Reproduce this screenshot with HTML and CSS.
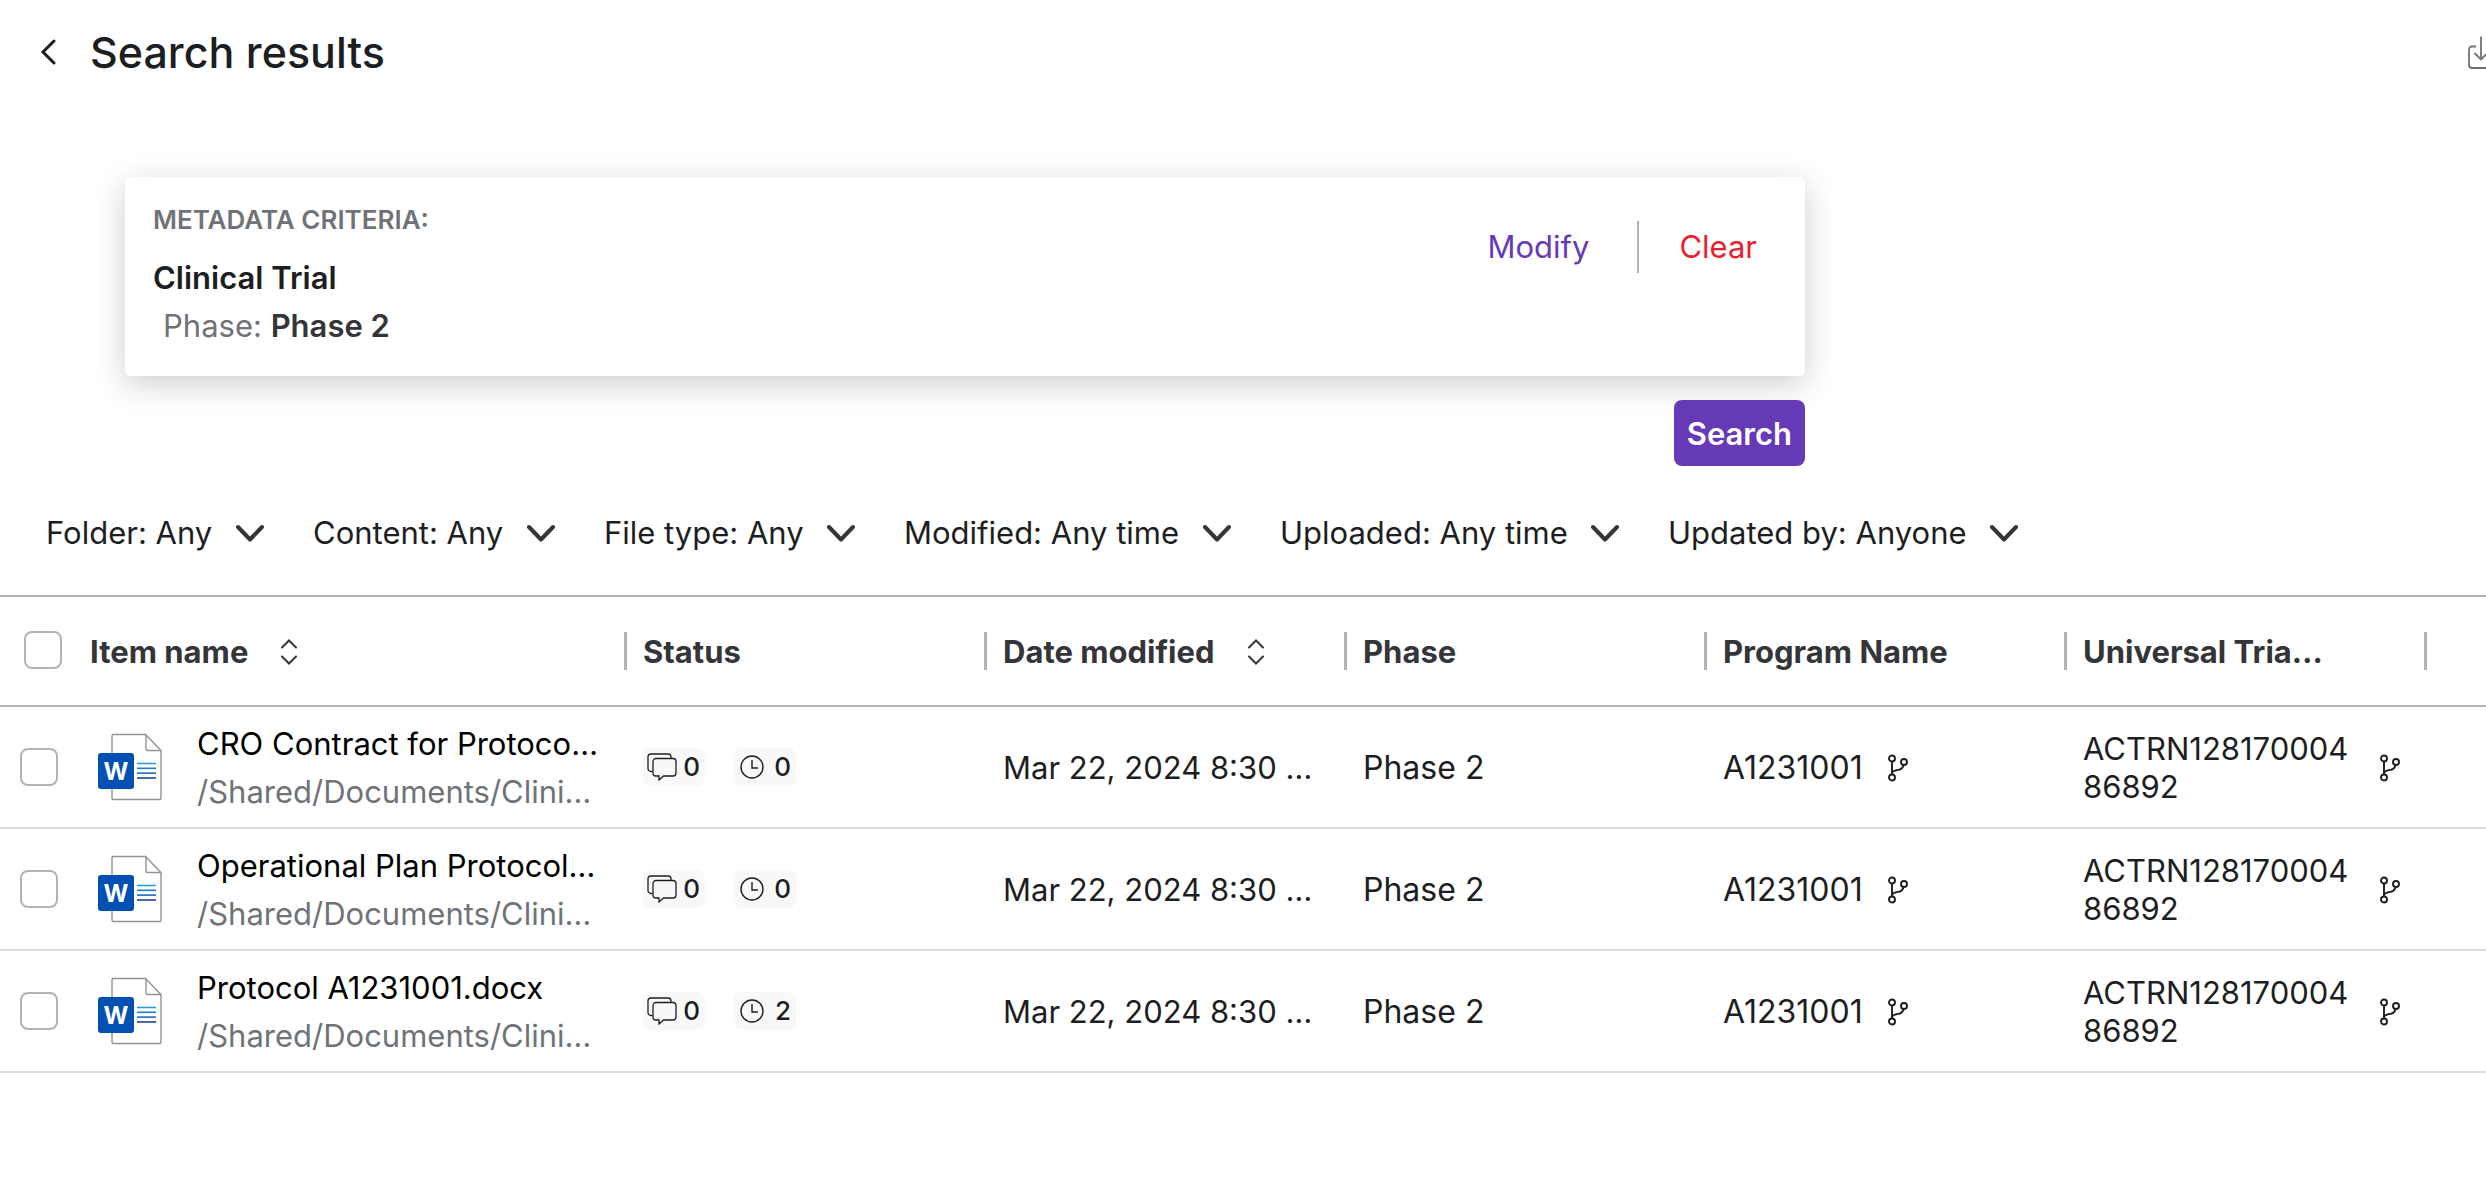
FILE: index.html
```html
<!DOCTYPE html>
<html lang="en">
<head>
<meta charset="utf-8">
<meta name="viewport" content="width=device-width, initial-scale=1">
<title>Search results</title>
<link rel="stylesheet" href="styles.css">
</head>
<body>
<svg class="sprite" aria-hidden="true">
  <symbol id="chevron" viewBox="0 0 30 18"><path d="M3 3l12 12.500L27 3" fill="none" stroke="currentColor" stroke-width="4" stroke-linecap="round" stroke-linejoin="round"/></symbol>
  <symbol id="sort" viewBox="0 0 18 26"><path d="M2 8.500L9 1.500l7 7M2 17.500l7 7 7-7" fill="none" stroke="currentColor" stroke-width="2" stroke-linecap="round"/></symbol>
  <symbol id="comments" viewBox="0 0 30 28">
    <path d="M5.500 18.500H4a3 3 0 0 1-3-3V4a3 3 0 0 1 3-3h17a3 3 0 0 1 3 3v1.500" fill="none" stroke="currentColor" stroke-width="1.300"/>
    <path d="M9 5.500h17a3 3 0 0 1 3 3v11.500a3 3 0 0 1-3 3h-9.500l-4.500 4v-4H9a3 3 0 0 1-3-3V8.500a3 3 0 0 1 3-3z" fill="none" stroke="currentColor" stroke-width="1.300"/>
  </symbol>
  <symbol id="clock" viewBox="0 0 24 24"><circle cx="12" cy="12" r="11" fill="none" stroke="currentColor" stroke-width="1.400"/><path d="M12 5v8h6" fill="none" stroke="currentColor" stroke-width="1.400"/></symbol>
  <symbol id="branch" viewBox="0 0 20 28">
    <g fill="none" stroke="currentColor" stroke-width="1.900"><circle cx="4" cy="4.500" r="3"/><circle cx="4" cy="23.500" r="3"/><circle cx="16" cy="8" r="3"/><path d="M4 7.500v13M15.500 11c-.5 3-1.500 4-4.500 4.700-3 .6-5.500.8-7 2.800"/></g>
  </symbol>
  <symbol id="word" viewBox="0 0 64 68">
    <path d="M14 1.500h33.500L63 17.500V65a1.500 1.500 0 0 1-1.500 1.500h-46A1.500 1.500 0 0 1 14 65V3a1.500 1.500 0 0 1 1.500-1.500z" fill="#fff" stroke="#929292" stroke-width="1.400"/>
    <path d="M48 2v14a1.500 1.500 0 0 0 1.500 1.500H63" fill="none" stroke="#929292" stroke-width="1.400"/>
    <g stroke-width="1.600"><path d="M39 30.500h19" stroke="#2a9fe0"/><path d="M39 35.300h19" stroke="#1a7ed0"/><path d="M39 40.100h19" stroke="#2266bd"/><path d="M39 45h19" stroke="#174693"/></g>
    <rect y="20" width="36" height="36" rx="3" fill="#0350b3"/>
    <text x="18" y="47" class="word-letter" text-anchor="middle">W</text>
  </symbol>
</svg>

<header class="page-header">
  <button class="icon-button" type="button" aria-label="Back">
    <svg width="16" height="26" viewBox="0 0 16 26"><path d="M14 2L3 13l11 11" fill="none" stroke="currentColor" stroke-width="3" stroke-linecap="round"/></svg>
  </button>
  <h1 class="page-title">Search results</h1>
  <button class="icon-button download" type="button" aria-label="Download">
    <svg width="28" height="34" viewBox="0 0 28 34"><path d="M8 11.500H4a3 3 0 0 0-3 3V30a3 3 0 0 0 3 3h20a3 3 0 0 0 3-3V14.500a3 3 0 0 0-3-3h-4M13 1.500v23M6.500 18l6.500 6.500 6.500-6.500" fill="none" stroke="currentColor" stroke-width="1.800"/></svg>
  </button>
</header>

<main>
  <section class="criteria">
    <div class="criteria-card">
      <div class="criteria-text">
        <h2 class="criteria-heading">METADATA CRITERIA:</h2>
        <p class="criteria-group">Clinical Trial</p>
        <p class="criteria-field">Phase: <b>Phase 2</b></p>
      </div>
      <div class="criteria-actions">
        <button class="text-button modify" type="button">Modify</button>
        <button class="text-button clear" type="button">Clear</button>
      </div>
    </div>
    <button class="search-button" type="button">Search</button>
  </section>

  <form class="filters">
    <div class="filter"><select aria-label="Folder"><option>Folder: Any</option></select><svg><use href="#chevron"/></svg></div>
    <div class="filter"><select aria-label="Content"><option>Content: Any</option></select><svg><use href="#chevron"/></svg></div>
    <div class="filter"><select aria-label="File type"><option>File type: Any</option></select><svg><use href="#chevron"/></svg></div>
    <div class="filter"><select aria-label="Modified"><option>Modified: Any time</option></select><svg><use href="#chevron"/></svg></div>
    <div class="filter"><select aria-label="Uploaded"><option>Uploaded: Any time</option></select><svg><use href="#chevron"/></svg></div>
    <div class="filter"><select aria-label="Updated by"><option>Updated by: Anyone</option></select><svg><use href="#chevron"/></svg></div>
  </form>

  <table class="results">
    <colgroup><col class="col-select"><col class="col-name"><col class="col-data"><col class="col-data"><col class="col-data"><col class="col-data"><col class="col-data"><col></colgroup>
    <thead>
      <tr>
        <th class="select" scope="col"><input type="checkbox" aria-label="Select all"></th>
        <th class="name" scope="col"><div class="head">Item name <svg class="sort"><use href="#sort"/></svg></div></th>
        <th scope="col"><div class="head">Status</div></th>
        <th scope="col"><div class="head">Date modified <svg class="sort"><use href="#sort"/></svg></div></th>
        <th scope="col"><div class="head">Phase</div></th>
        <th scope="col"><div class="head">Program Name</div></th>
        <th scope="col"><div class="head">Universal Tria…</div></th>
        <td></td>
      </tr>
    </thead>
    <tbody>
      <tr>
        <td class="select"><input type="checkbox" aria-label="Select CRO Contract for Protoco…"></td>
        <td class="name"><div class="item"><svg class="file"><use href="#word"/></svg><div class="item-text"><a class="item-title" href="#">CRO Contract for Protoco…</a><a class="item-path" href="#">/Shared/Documents/Clini…</a></div></div></td>
        <td><div class="badges"><span class="badge"><svg class="comments"><use href="#comments"/></svg>0</span><span class="badge"><svg class="clock"><use href="#clock"/></svg>0</span></div></td>
        <td class="date">Mar 22, 2024 8:30 …</td>
        <td class="text">Phase 2</td>
        <td class="text"><div class="value">A1231001<svg class="branch"><use href="#branch"/></svg></div></td>
        <td class="text"><div class="value"><span class="trial">ACTRN12817000486892</span><svg class="branch"><use href="#branch"/></svg></div></td>
        <td></td>
      </tr>
      <tr>
        <td class="select"><input type="checkbox" aria-label="Select Operational Plan Protocol…"></td>
        <td class="name"><div class="item"><svg class="file"><use href="#word"/></svg><div class="item-text"><a class="item-title" href="#">Operational Plan Protocol…</a><a class="item-path" href="#">/Shared/Documents/Clini…</a></div></div></td>
        <td><div class="badges"><span class="badge"><svg class="comments"><use href="#comments"/></svg>0</span><span class="badge"><svg class="clock"><use href="#clock"/></svg>0</span></div></td>
        <td class="date">Mar 22, 2024 8:30 …</td>
        <td class="text">Phase 2</td>
        <td class="text"><div class="value">A1231001<svg class="branch"><use href="#branch"/></svg></div></td>
        <td class="text"><div class="value"><span class="trial">ACTRN12817000486892</span><svg class="branch"><use href="#branch"/></svg></div></td>
        <td></td>
      </tr>
      <tr>
        <td class="select"><input type="checkbox" aria-label="Select Protocol A1231001.docx"></td>
        <td class="name"><div class="item"><svg class="file"><use href="#word"/></svg><div class="item-text"><a class="item-title" href="#">Protocol A1231001.docx</a><a class="item-path" href="#">/Shared/Documents/Clini…</a></div></div></td>
        <td><div class="badges"><span class="badge"><svg class="comments"><use href="#comments"/></svg>0</span><span class="badge"><svg class="clock"><use href="#clock"/></svg>2</span></div></td>
        <td class="date">Mar 22, 2024 8:30 …</td>
        <td class="text">Phase 2</td>
        <td class="text"><div class="value">A1231001<svg class="branch"><use href="#branch"/></svg></div></td>
        <td class="text"><div class="value"><span class="trial">ACTRN12817000486892</span><svg class="branch"><use href="#branch"/></svg></div></td>
        <td></td>
      </tr>
    </tbody>
  </table>
</main>
</body>
</html>
```
FILE: styles.css
```css
* { box-sizing: border-box; }

body {
  margin: 0;
  background: #fff;
  color: #1d1e22;
  font: 400 31px/38px Inter, "Liberation Sans", sans-serif;
}

h1, h2, p { margin: 0; }
a { color: inherit; text-decoration: none; }
svg { display: block; flex: none; }
button, select { font: inherit; color: inherit; cursor: pointer; }
.sprite { display: none; }

/* Page header */
.page-header {
  display: flex;
  align-items: center;
  height: 104px;
  padding-left: 40px;
  overflow: hidden;
}
.icon-button { padding: 0; border: 0; background: none; }
.page-title { margin-left: 34px; font-size: 43px; line-height: 52px; font-weight: 500; }
.download { margin-left: auto; margin-right: -10px; color: #6f7378; }

/* Criteria card */
.criteria {
  display: flex;
  flex-direction: column;
  align-items: flex-end;
  gap: 24px;
  max-width: 1805px;
  padding: 73px 0 0 125px;
}
.criteria-card {
  display: flex;
  justify-content: space-between;
  align-items: flex-start;
  width: 100%;
  padding: 24px 28px 31px;
  border-radius: 6px;
  background: #fff;
  box-shadow: 0 8px 32px rgba(0, 0, 0, .2);
}
.criteria-heading { margin-bottom: 20px; font-size: 26px; font-weight: 600; color: #6f7378; }
.criteria-group { margin-bottom: 10px; font-weight: 600; }
.criteria-field { padding-left: 10px; color: #6f7378; }
.criteria-field b { font-weight: 600; color: #343539; }
.criteria-actions { display: flex; margin-top: 20px; }
.text-button { height: 52px; padding: 0 20px 0 40px; border: 0; background: none; }
.modify { padding: 0 48px 0 0; border-right: 2px solid #b0b4b8; color: #6639b7; }
.clear { color: #eb1e2f; }
.search-button {
  height: 66px;
  padding: 2px 13px 0;
  border: 0;
  border-radius: 8px;
  background: #6639b7;
  color: #fff;
  font-weight: 600;
}

/* Filters */
.filters { display: flex; gap: 48px; padding: 46px 46px 42px; }
.filter { display: grid; align-items: center; color: #343539; }
.filter select, .filter svg { grid-area: 1 / 1; }
.filter select {
  appearance: none;
  height: 41px;
  padding: 0 52px 0 0;
  border: 0;
  background: none;
  color: #1d1e22;
}
.filter svg { justify-self: end; width: 30px; height: 18px; pointer-events: none; }

/* Results table */
.results { width: 100%; table-layout: fixed; border-collapse: separate; border-spacing: 0; }
.col-select { width: 88px; }
.col-name { width: 539px; }
.col-data { width: 360px; }
th, td { padding: 0 0 0 16px; text-align: left; font-weight: 400; }
thead th, thead td {
  height: 112px;
  border-top: 2px solid #b0b4b8;
  border-bottom: 2px solid #b0b4b8;
  color: #343539;
  font-weight: 700;
}
tbody td { height: 122px; border-bottom: 2px solid #dcdde1; white-space: nowrap; }
tbody .date { padding-top: 2px; }
tbody .text { padding-top: 2px; font-size: 32px; }
.head {
  display: flex;
  align-items: center;
  height: 38px;
  padding-top: 2px;
  border-right: 3px solid #b0b4b8;
}
.sort { width: 18px; height: 26px; margin-left: 32px; }
thead .name { padding-left: 2px; }
tbody .name { padding-left: 10px; }
thead .select { padding: 0 0 2px 24px; }
tbody .select { padding-left: 20px; }
.select input {
  appearance: none;
  display: block;
  width: 38px;
  height: 38px;
  margin: 0;
  border: 2px solid #b0b4b8;
  border-radius: 8px;
}

.item { display: flex; align-items: center; gap: 35px; }
.item-text { padding-top: 2px; }
.item a { display: block; line-height: 48px; }
.item-title { color: #000; }
.item-path { color: #6f7378; }
.file { width: 64px; height: 68px; }
.word-letter { font: 700 24px Inter, sans-serif; fill: #fff; }

.badges { display: flex; gap: 29px; }
.badge {
  display: flex;
  align-items: center;
  justify-content: space-between;
  width: 62px;
  height: 38px;
  padding: 0 5px 0 4px;
  border-radius: 8px;
  background: #f8f8f8;
  font-size: 26px;
  font-weight: 500;
}
.comments { width: 30px; height: 28px; }
.clock { width: 24px; height: 24px; margin-left: 2px; }

.value { display: flex; align-items: center; gap: 25px; }
.trial { width: 272px; font-size: 31px; white-space: normal; word-break: break-all; }
.branch { width: 20px; height: 28px; }
```
